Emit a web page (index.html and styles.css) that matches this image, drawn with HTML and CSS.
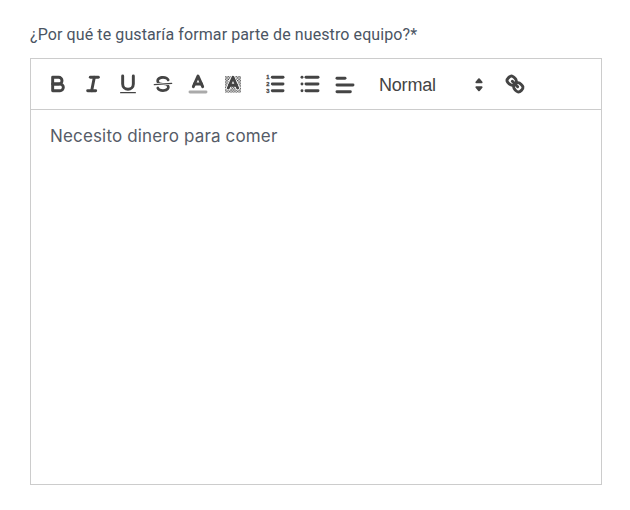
FILE: index.html
```html
<!DOCTYPE html>
<html lang="es">
<head>
<meta charset="utf-8">
<title>Formulario</title>
<link rel="stylesheet" href="styles.css">
</head>
<body>
<label class="label">¿Por qué te gustaría formar parte de nuestro equipo?*</label>
<div class="editor">
  <div class="toolbar">
    <div class="group">
      <svg class="icon" viewBox="0 0 18 18"><path class="s" d="M5,4H9.5A2.5,2.5,0,0,1,12,6.5v0A2.5,2.5,0,0,1,9.5,9H5V4Z"/><path class="s" d="M5,9h5.5A2.5,2.5,0,0,1,13,11.5v0A2.5,2.5,0,0,1,10.5,14H5V9Z"/></svg>
      <svg class="icon" viewBox="0 0 18 18"><line class="s" x1="7" x2="13" y1="4" y2="4"/><line class="s" x1="5" x2="11" y1="14" y2="14"/><line class="s" x1="8" x2="10" y1="14" y2="4"/></svg>
      <svg class="icon" viewBox="0 0 18 18"><path class="s" d="M5,3V9a4.012,4.012,0,0,0,4,4H9a4.012,4.012,0,0,0,4-4V3"/><rect class="f" height="1" rx=".5" ry=".5" width="12" x="3" y="15"/></svg>
      <svg class="icon" viewBox="0 0 18 18"><line class="s thin" x1="15.5" x2="2.5" y1="8.5" y2="9.5"/><path class="f" d="M9.007,8C6.542,7.791,6,7.519,6,6.5,6,5.792,7.283,5,9,5c1.571,0,2.765.679,2.969,1.309a1,1,0,0,0,1.9-.617C13.356,4.106,11.354,3,9,3,6.2,3,4,4.538,4,6.5a3.2,3.2,0,0,0,.5,1.843Z"/><path class="f" d="M8.984,10C11.457,10.208,12,10.479,12,11.5c0,.708-1.283,1.5-3,1.5-1.571,0-2.765-.679-2.969-1.309a1,1,0,1,0-1.9.617C4.644,13.894,6.646,15,9,15c2.8,0,5-1.538,5-3.5a3.2,3.2,0,0,0-.5-1.843Z"/></svg>
      <svg class="icon" viewBox="0 0 18 18"><line class="s label-line" x1="3" x2="15" y1="15" y2="15"/><polyline class="s" points="5.5 11 9 3 12.5 11"/><line class="s" x1="11.63" x2="6.38" y1="9" y2="9"/></svg>
      <svg class="icon" viewBox="0 0 18 18"><defs><pattern id="hatch" width="2" height="2" patternUnits="userSpaceOnUse"><rect class="f" width="1" height="1"/><rect class="f" x="1" y="1" width="1" height="1"/></pattern></defs><rect x="3" y="3" width="12" height="12.5" fill="url(#hatch)"/><polyline class="halo" points="5.5 12 9 4 12.5 12"/><polyline class="s" points="5.5 12 9 4 12.5 12"/><line class="s" x1="11.63" x2="6.38" y1="10" y2="10"/></svg>
    </div>
    <div class="group lists">
      <svg class="icon" viewBox="0 0 18 18"><line class="s" x1="7" x2="15" y1="4" y2="4"/><line class="s" x1="7" x2="15" y1="9" y2="9"/><line class="s" x1="7" x2="15" y1="14" y2="14"/><text class="num" x="3.6" y="5.4">1</text><text class="num" x="3.6" y="10.4">2</text><text class="num" x="3.6" y="15.4">3</text></svg>
      <svg class="icon" viewBox="0 0 18 18"><line class="s" x1="6" x2="15" y1="4" y2="4"/><line class="s" x1="6" x2="15" y1="9" y2="9"/><line class="s" x1="6" x2="15" y1="14" y2="14"/><line class="s" x1="3" x2="3" y1="4" y2="4"/><line class="s" x1="3" x2="3" y1="9" y2="9"/><line class="s" x1="3" x2="3" y1="14" y2="14"/></svg>
      <svg class="icon" viewBox="0 -0.75 18 18"><line class="s" x1="3" x2="15" y1="9" y2="9"/><line class="s" x1="3" x2="13" y1="14" y2="14"/><line class="s" x1="3" x2="9" y1="4" y2="4"/></svg>
    </div>
    <div class="picker">
      <span class="picker-label">Normal</span>
      <svg class="icon" viewBox="0 0 18 18"><polygon class="s arrow f" points="7 10.6 9 13 11 10.6 7 10.6"/><polygon class="s arrow f" points="7 7 9 4.6 11 7 7 7"/></svg>
    </div>
    <svg class="icon" viewBox="0 0 18 18"><line class="s" x1="7" x2="11" y1="7" y2="11"/><path class="s" d="M8.9,4.577a3.476,3.476,0,0,1,.36,4.679A3.476,3.476,0,0,1,4.577,8.9C3.185,7.5,2.035,6.4,4.217,4.217S7.5,3.185,8.9,4.577Z"/><path class="s" d="M13.423,9.1a3.476,3.476,0,0,0-4.679-.36,3.476,3.476,0,0,0,.36,4.679c1.392,1.392,2.5,2.542,4.679.36S14.815,10.5,13.423,9.1Z"/></svg>
  </div>
  <div class="content">Necesito dinero para comer</div>
</div>
</body>
</html>
```

FILE: styles.css
```css
html, body {
  margin: 0;
  padding: 0;
  background: #fff;
}
body {
  padding: 25px 28px 0 30px;
}
.label {
  display: block;
  font: 400 16px/20px Roboto, sans-serif;
  letter-spacing: 0.1px;
  color: #4b5563;
  margin-bottom: 13px;
}
.editor {
  border: 1px solid #ccc;
  height: 425px;
  display: flex;
  flex-direction: column;
}
.toolbar {
  display: flex;
  align-items: center;
  height: 50px;
  padding-left: 15px;
  border-bottom: 1px solid #ccc;
  flex: none;
}
.group {
  display: flex;
  gap: 11px;
}
.lists {
  margin-left: 18px;
}
.icon {
  width: 24px;
  height: 24px;
  flex: none;
}
.s {
  fill: none;
  stroke: #444;
  stroke-width: 2.2;
  stroke-linecap: round;
  stroke-linejoin: round;
}
.halo {
  fill: none;
  stroke: #fff;
  stroke-width: 3.4;
  stroke-linecap: round;
  stroke-linejoin: round;
}
.thin {
  stroke-width: 1;
}
.arrow {
  stroke-width: 1.4;
  fill: #444;
}
.f {
  fill: #444;
}
.label-line {
  stroke: #aaa;
}
.num {
  font: 700 4.3px "Liberation Sans", sans-serif;
  fill: #444;
  stroke: #444;
  stroke-width: 0.2;
  text-anchor: middle;
}
.picker {
  display: flex;
  align-items: center;
  width: 112px;
  margin: 1px 12px 0 22px;
  justify-content: space-between;
}
.picker-label {
  font: 400 18px/24px "Liberation Sans", sans-serif;
  letter-spacing: -0.2px;
  color: #444;
}
.content {
  padding: 14px 19px;
  font: 400 17px/24px Inter, sans-serif;
  color: #565c68;
  letter-spacing: 0.16px;
}
```
